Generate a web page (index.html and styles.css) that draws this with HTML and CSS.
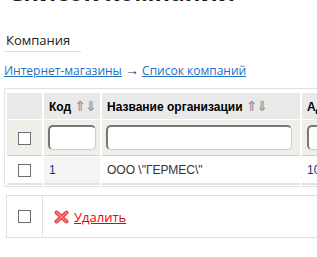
FILE: index.html
```html
<!DOCTYPE html>
<html lang="ru">
<head>
	<meta charset="utf-8">
	<title>Список компаний</title>
	<link rel="stylesheet" href="styles.css">
</head>
<body>
<div class="page">
	<h1 class="title">Список компаний</h1>

	<div class="tabs">
		<span class="tab">Компания</span>
	</div>

	<div class="crumbs">
		<a href="#">Интернет-магазины</a> <span class="arrow">&rarr;</span> <a href="#">Список компаний</a>
	</div>

	<!-- список компаний -->
	<div class="grid-box">
		<table class="grid">
			<tr class="head">
				<th class="chk"></th>
				<th class="c-id">Код <span class="sort">&#8657;&#8659;</span></th>
				<th class="c-name">Название организации <span class="sort">&#8657;&#8659;</span></th>
				<th class="c-addr">Адрес <span class="sort">&#8657;&#8659;</span></th>
			</tr>
			<tr class="filter">
				<td class="chk"><input type="checkbox" class="box"></td>
				<td class="c-id"><input type="text" class="field"></td>
				<td class="c-name"><input type="text" class="field"></td>
				<td class="c-addr"><input type="text" class="field"></td>
			</tr>
			<tr class="row">
				<td class="chk"><input type="checkbox" class="box"></td>
				<td class="c-id"><a href="#">1</a></td>
				<td class="c-name">ООО \"ГЕРМЕС\"</td>
				<td class="c-addr"><a href="#">10</a></td>
			</tr>
		</table>
	</div>

	<!-- действия -->
	<div class="actions">
		<div class="act-chk"><input type="checkbox" class="box"></div>
		<div class="act-links">
			<svg class="del-icon" width="15" height="14" viewBox="0 0 15 14">
				<path d="M2.5 2.5 L12.5 11.5 M12.5 2.5 L2.5 11.5" stroke="#ec4046" stroke-width="4" stroke-linecap="round"/>
				<path d="M2.5 2.5 L12.5 11.5 M12.5 2.5 L2.5 11.5" stroke="#fa8a8e" stroke-width="1.2" stroke-linecap="round"/>
			</svg>
			<a href="#" class="del">Удалить</a>
		</div>
	</div>
</div>
</body>
</html>
```

FILE: styles.css
```css
html, body {
	margin: 0;
	background: #fff;
}
.page {
	overflow: hidden;
	height: 257px;
	font-family: "Open Sans", "Noto Sans", sans-serif;
	color: #222;
}
.title {
	font-size: 24px;
	font-weight: bold;
	line-height: 24px;
	margin: -20px 0 0 8px;
	white-space: nowrap;
	color: #1c1c1c;
}
.tabs {
	margin: 24px 0 0 4px;
}
.tab {
	display: inline-block;
	width: 75px;
	padding: 0 0 2px 2px;
	font-size: 13px;
	line-height: 18px;
	border-bottom: 1px solid #ddd;
}
.crumbs {
	margin: 11px 0 0 4px;
	font-size: 12px;
	line-height: 16px;
	white-space: nowrap;
}
.crumbs a {
	color: #1f6fc5;
}
.arrow {
	font-size: 14px;
	line-height: 14px;
	color: #1a3a6a;
}

.grid-box {
	margin: 9px 0 0 4px;
	width: 560px;
	border: 1px solid #e3e3e3;
	padding: 3px 0 0 0;
}
.grid {
	border-collapse: separate;
	border-spacing: 2px 1px;
	font-family: "Liberation Sans", Arial, sans-serif;
	font-size: 12px;
	width: 556px;
}
.grid th, .grid td {
	padding: 0 4px 0 5px;
	text-align: left;
	white-space: nowrap;
}
.chk {
	width: 35px;
	text-align: center !important;
	padding: 0 !important;
}
.c-id {
	width: 47px;
}
.c-name {
	width: 189px;
}
.head th {
	height: 26px;
	background: #e9e9e9;
	color: #000;
	font-weight: bold;
}
.sort {
	font-family: "DejaVu Sans", sans-serif;
	font-weight: bold;
	font-size: 14px;
	color: #999;
	letter-spacing: -1px;
}
.filter td {
	height: 35px;
	background: #efeee9;
	border-bottom: 1px solid #d6d0b4;
}
.filter .c-id, .filter .c-name {
	padding: 0 4px;
}
.field {
	box-sizing: border-box;
	width: 100%;
	height: 25px;
	margin: 0;
	display: block;
	border: 2px solid #777;
	border-right: 1px solid #ccc;
	border-bottom: 1px solid #ccc;
	border-radius: 5px;
	background: #fff;
}
.filter .c-name .field {
	width: 186px;
}
.row td {
	height: 26px;
	border-bottom: 2px solid #e2e2e2;
	color: #333;
}
.row .c-id {
	background: #f4f4f4;
}
.row a {
	color: #28288a;
	text-decoration: none;
}
.box {
	-webkit-appearance: none;
	appearance: none;
	width: 13px;
	height: 13px;
	margin: 0;
	border: 1px solid #6e6e6e;
	background: #fff;
	vertical-align: middle;
	display: inline-block;
}

.actions {
	display: flex;
	margin: 8px 0 0 6px;
	width: 560px;
	height: 41px;
	border: 1px solid #e0e0e0;
}
.act-chk {
	width: 35px;
	border-right: 1px solid #e0e0e0;
	display: flex;
	align-items: center;
	justify-content: center;
}
.act-links {
	display: flex;
	align-items: center;
	padding-left: 11px;
	font-size: 13px;
}
.del-icon {
	margin-right: 5px;
}
.del {
	color: #e00;
}
```
